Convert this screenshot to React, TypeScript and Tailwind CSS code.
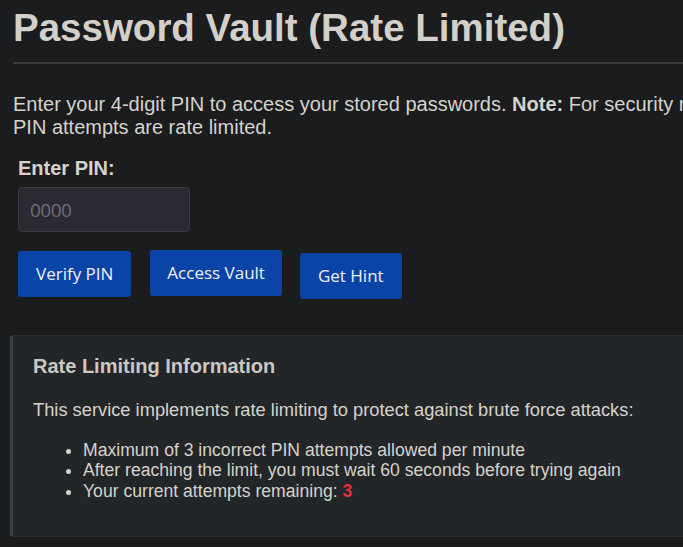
export default function App() {
  return (
    <div className="min-h-screen w-full overflow-hidden bg-[#1b1c1e] font-['Liberation_Sans',Arial,sans-serif] text-[#d6d2cc]">
      <div className="w-[800px] pl-[13px] pt-[6px]">
        <h1 className="text-[38.5px] font-bold leading-[44px] text-[#d4cfc9]">Password Vault (Rate Limited)</h1>
        <hr className="mt-[12px] h-[2px] border-0 bg-[#3b3b3d]" />

        <p className="mt-[29px] w-[775px] text-[20px] leading-[23px]">
          Enter your 4-digit PIN to access your stored passwords. <strong>Note:</strong> For security reasons, PIN
          attempts are rate limited.
        </p>

        <div className="ml-[5px] mt-[18px]">
          <label className="block text-[20px] font-bold leading-[23px]">Enter PIN:</label>
          <input
            type="password"
            placeholder="0000"
            className="mt-[7px] block h-[45px] w-[172px] rounded-[4px] border border-[#3c3b44] bg-[#2b2a33] pl-[11px] font-['Open_Sans',sans-serif] text-[19px] tracking-[-0.5px] text-[#d6d2cc] placeholder:text-[#6f6e76] outline-none"
          />

          <div className="mt-[18px] flex items-start font-['Open_Sans',sans-serif] text-[17px] text-[#eef1f8]">
            <button className="mt-[1px] flex h-[46px] items-center rounded-[3px] bg-[#0a44a6] px-[18px]">Verify PIN</button>
            <button className="ml-[19px] flex h-[46px] items-center rounded-[3px] bg-[#0a44a6] px-[17px]">Access Vault</button>
            <button className="ml-[18px] mt-[3px] flex h-[46px] items-center rounded-[3px] bg-[#0a44a6] px-[18px]">Get Hint</button>
          </div>
        </div>

        <div className="-ml-[3px] mt-[36px] rounded-[3px] border border-[#2a2d30] border-l-[3px] border-l-[#3c4043] bg-[#232628] pb-[34px] pl-[20px] pt-[19px]">
          <h2 className="text-[20px] font-bold leading-[23px] text-[#ccc7c1]">Rate Limiting Information</h2>
          <p className="mt-[22px] text-[18.3px] leading-[20.7px]">
            This service implements rate limiting to protect against brute force attacks:
          </p>
          <ul className="mt-[19px] list-disc pl-[50px] text-[17.6px] leading-[20.7px]">
            <li>Maximum of 3 incorrect PIN attempts allowed per minute</li>
            <li>After reaching the limit, you must wait 60 seconds before trying again</li>
            <li>
              Your current attempts remaining: <span className="font-bold text-[#e0323f]">3</span>
            </li>
          </ul>
        </div>
      </div>
    </div>
  );
}
